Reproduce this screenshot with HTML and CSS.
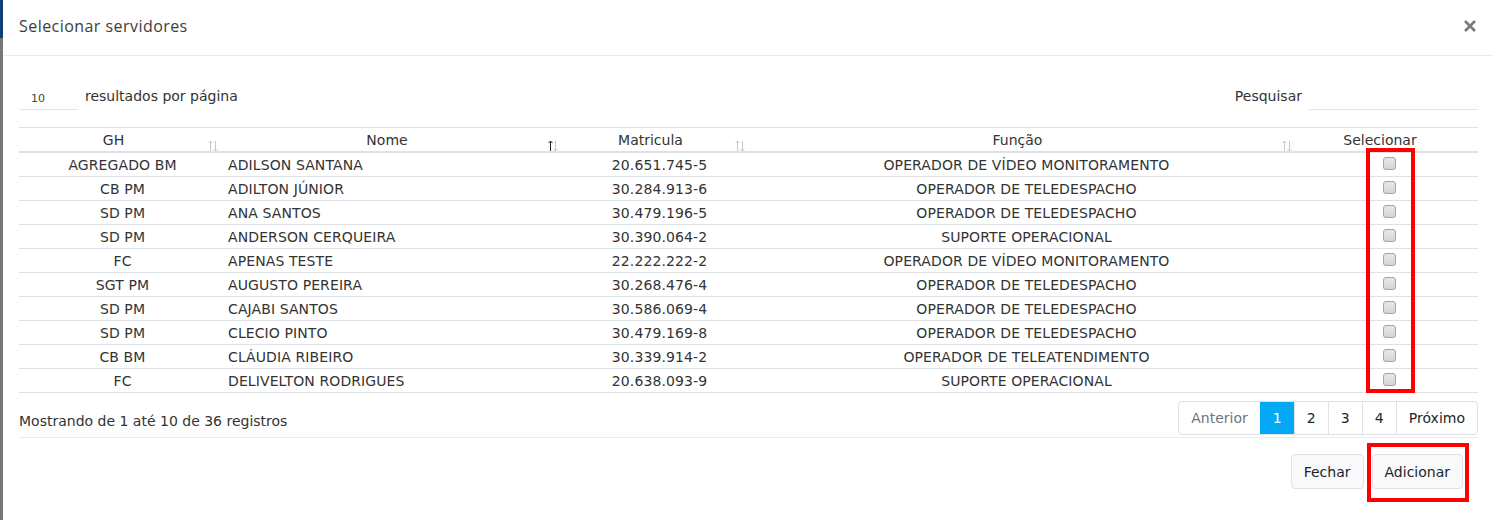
FILE: index.html
```html
<!DOCTYPE html>
<html lang="pt-BR">
<head>
<meta charset="utf-8">
<title>Selecionar servidores</title>
<link rel="stylesheet" href="styles.css">
</head>
<body>
<div class="page">
  <div class="backdrop"><div class="backdrop-top"></div></div>
  <div class="modal">
    <div class="modal-header">
      <h5 class="modal-title">Selecionar servidores</h5>
      <button class="close" aria-label="Fechar">
        <svg width="14" height="14" viewBox="0 0 14 14"><path d="M2 2 L12 12 M12 2 L2 12" stroke="#7a7a7a" stroke-width="2.6" stroke-linecap="butt" fill="none"/></svg>
      </button>
    </div>
    <div class="modal-body">
      <div class="controls">
        <div class="length">
          <span class="select">10</span>
          <span class="length-label">resultados por página</span>
        </div>
        <div class="search">
          <span class="search-label">Pesquisar</span>
          <span class="search-input"></span>
        </div>
      </div>
      <table class="grid">
        <colgroup>
          <col class="c-gh"><col class="c-nome"><col class="c-mat"><col class="c-func"><col class="c-sel">
        </colgroup>
        <thead>
          <tr>
            <th>GH<span class="sort"><svg width="10" height="12" viewBox="0 0 10 12"><path d="M2.5 1 V11 M0.5 3 L2.5 1 L4.5 3" stroke="#c8c8c8" stroke-width="1" fill="none"/><path d="M7.5 1 V11 M5.5 9 L7.5 11 L9.5 9" stroke="#c8c8c8" stroke-width="1" fill="none"/></svg></span></th>
            <th>Nome<span class="sort"><svg width="10" height="12" viewBox="0 0 10 12"><path d="M2.5 1 V11 M0.5 3 L2.5 1 L4.5 3" stroke="#222" stroke-width="1" fill="none"/><path d="M7.5 1 V11 M5.5 9 L7.5 11 L9.5 9" stroke="#c8c8c8" stroke-width="1" fill="none"/></svg></span></th>
            <th>Matricula<span class="sort"><svg width="10" height="12" viewBox="0 0 10 12"><path d="M2.5 1 V11 M0.5 3 L2.5 1 L4.5 3" stroke="#c8c8c8" stroke-width="1" fill="none"/><path d="M7.5 1 V11 M5.5 9 L7.5 11 L9.5 9" stroke="#c8c8c8" stroke-width="1" fill="none"/></svg></span></th>
            <th>Função<span class="sort"><svg width="10" height="12" viewBox="0 0 10 12"><path d="M2.5 1 V11 M0.5 3 L2.5 1 L4.5 3" stroke="#c8c8c8" stroke-width="1" fill="none"/><path d="M7.5 1 V11 M5.5 9 L7.5 11 L9.5 9" stroke="#c8c8c8" stroke-width="1" fill="none"/></svg></span></th>
            <th>Selecionar</th>
          </tr>
        </thead>
        <tbody>
          <tr><td>AGREGADO BM</td><td class="left">ADILSON SANTANA</td><td>20.651.745-5</td><td>OPERADOR DE VÍDEO MONITORAMENTO</td><td><span class="check"></span></td></tr>
          <tr><td>CB PM</td><td class="left">ADILTON JÚNIOR</td><td>30.284.913-6</td><td>OPERADOR DE TELEDESPACHO</td><td><span class="check"></span></td></tr>
          <tr><td>SD PM</td><td class="left">ANA SANTOS</td><td>30.479.196-5</td><td>OPERADOR DE TELEDESPACHO</td><td><span class="check"></span></td></tr>
          <tr><td>SD PM</td><td class="left">ANDERSON CERQUEIRA</td><td>30.390.064-2</td><td>SUPORTE OPERACIONAL</td><td><span class="check"></span></td></tr>
          <tr><td>FC</td><td class="left">APENAS TESTE</td><td>22.222.222-2</td><td>OPERADOR DE VÍDEO MONITORAMENTO</td><td><span class="check"></span></td></tr>
          <tr><td>SGT PM</td><td class="left">AUGUSTO PEREIRA</td><td>30.268.476-4</td><td>OPERADOR DE TELEDESPACHO</td><td><span class="check"></span></td></tr>
          <tr><td>SD PM</td><td class="left">CAJABI SANTOS</td><td>30.586.069-4</td><td>OPERADOR DE TELEDESPACHO</td><td><span class="check"></span></td></tr>
          <tr><td>SD PM</td><td class="left">CLECIO PINTO</td><td>30.479.169-8</td><td>OPERADOR DE TELEDESPACHO</td><td><span class="check"></span></td></tr>
          <tr><td>CB BM</td><td class="left">CLÁUDIA RIBEIRO</td><td>30.339.914-2</td><td>OPERADOR DE TELEATENDIMENTO</td><td><span class="check"></span></td></tr>
          <tr><td>FC</td><td class="left">DELIVELTON RODRIGUES</td><td>20.638.093-9</td><td>SUPORTE OPERACIONAL</td><td><span class="check"></span></td></tr>
        </tbody>
      </table>
      <div class="table-foot">
        <div class="info">Mostrando de 1 até 10 de 36 registros</div>
        <ul class="pagination">
          <li class="pg disabled">Anterior</li>
          <li class="pg active">1</li>
          <li class="pg">2</li>
          <li class="pg">3</li>
          <li class="pg">4</li>
          <li class="pg">Próximo</li>
        </ul>
      </div>
      <div class="divider"></div>
    </div>
    <div class="modal-footer">
      <button class="btn">Fechar</button>
      <button class="btn">Adicionar</button>
    </div>
    <div class="mark mark-checks"></div>
    <div class="mark mark-add"></div>
  </div>
</div>
</body>
</html>
```

FILE: styles.css
```css
* { box-sizing: border-box; }
html, body { margin: 0; padding: 0; background: #fff; }
body {
  font-family: "DejaVu Sans", Verdana, sans-serif;
  font-size: 14px;
  color: #333;
  width: 1493px;
  height: 520px;
  overflow: hidden;
}
.page {
  display: flex;
  height: 520px;
}
.backdrop {
  width: 3px;
  background: #777;
  flex: none;
}
.backdrop-top {
  height: 38px;
  background: #0d3f76;
}
.modal {
  flex: 1;
  position: relative;
  background: #fff;
}
.modal-header {
  height: 56px;
  border-bottom: 1px solid #e9ecef;
  display: flex;
  align-items: center;
  justify-content: space-between;
  padding: 0 16px 0 16px;
}
.modal-title {
  margin: 0;
  font-family: "Open Sans", "Lato", sans-serif;
  font-weight: 400;
  font-size: 16px;
  color: #3c3c3c;
  letter-spacing: 0.45px;
  padding-bottom: 3px;
}
.close {
  border: 0;
  background: none;
  padding: 0;
  width: 14px;
  height: 14px;
  margin-bottom: 3px;
  display: flex;
}
.modal-body {
  padding: 30px 15px 0 16px;
}
.controls {
  display: flex;
  justify-content: space-between;
  align-items: flex-start;
  height: 41px;
}
.length {
  display: flex;
  align-items: center;
}
.select {
  width: 59px;
  height: 24px;
  border-bottom: 1px solid #e5e5e5;
  font-size: 11px;
  padding-left: 12px;
  line-height: 26px;
  color: #444;
}
.length-label {
  margin-left: 7px;
  margin-top: -4px;
}
.search {
  display: flex;
  align-items: center;
}
.search-label {
  margin-top: -4px;
}
.search-input {
  width: 169px;
  height: 24px;
  margin-left: 7px;
  border-bottom: 1px solid #e5e5e5;
}
.grid {
  width: 1459px;
  border-collapse: collapse;
  table-layout: fixed;
  border-top: 1px solid #dee2e6;
}
.c-gh { width: 207px; }
.c-nome { width: 340px; }
.c-mat { width: 187px; }
.c-func { width: 547px; }
.c-sel { width: 178px; }
.grid th {
  position: relative;
  font-weight: 400;
  height: 24px;
  padding: 2px 18px 0 0;
  text-align: center;
  border-bottom: 2px solid #dee2e6;
  line-height: 21px;
}
.sort {
  position: absolute;
  right: 8px;
  bottom: -1px;
  width: 10px;
  height: 12px;
  display: block;
}
.sort svg { display: block; }
.grid td {
  height: 24px;
  padding: 2px 2px 0;
  text-align: center;
  border-bottom: 1px solid #dee2e6;
  line-height: 21px;
  white-space: nowrap;
  letter-spacing: 0.1px;
}
.grid td.left { text-align: left; }
.check {
  display: inline-block;
  width: 13px;
  height: 13px;
  border: 1px solid #a5a5a5;
  border-radius: 3px;
  background: linear-gradient(#e8e8e8, #d4d4d4);
  vertical-align: middle;
  position: relative;
  top: -3px;
}
.table-foot {
  display: flex;
  justify-content: space-between;
  align-items: center;
  margin-top: 8px;
}
.info {
  padding-top: 6px;
}
.pagination {
  display: flex;
  list-style: none;
  margin: 0;
  padding: 0;
  border: 1px solid #dee2e6;
  border-radius: 4px;
  overflow: hidden;
}
.pg {
  height: 32px;
  line-height: 32px;
  padding: 0 12px;
  border-left: 1px solid #dee2e6;
  color: #212529;
  min-width: 34px;
  text-align: center;
}
.pg:first-child { border-left: 0; }
.pg.disabled { color: #6c757d; }
.pg.active {
  background: #03a9f4;
  color: #fff;
  border-left-color: #03a9f4;
}
.divider {
  height: 1px;
  background: #e9ecef;
  margin-top: 2px;
}
.modal-footer {
  display: flex;
  justify-content: flex-end;
  gap: 8px;
  padding: 16px 30px 0 0;
}
.btn {
  margin: 0;
  font-family: "DejaVu Sans", Verdana, sans-serif;
  font-size: 14px;
  color: #212529;
  background: #f8f9fa;
  border: 1px solid #dee2e6;
  border-radius: 4px;
  height: 35px;
  padding: 0 12px;
}
.mark {
  position: absolute;
  border: 4px solid #ff0000;
  pointer-events: none;
}
.mark-checks {
  left: 1363px;
  top: 148px;
  width: 49px;
  height: 245px;
}
.mark-add {
  left: 1364px;
  top: 443px;
  width: 102px;
  height: 59px;
}
```
